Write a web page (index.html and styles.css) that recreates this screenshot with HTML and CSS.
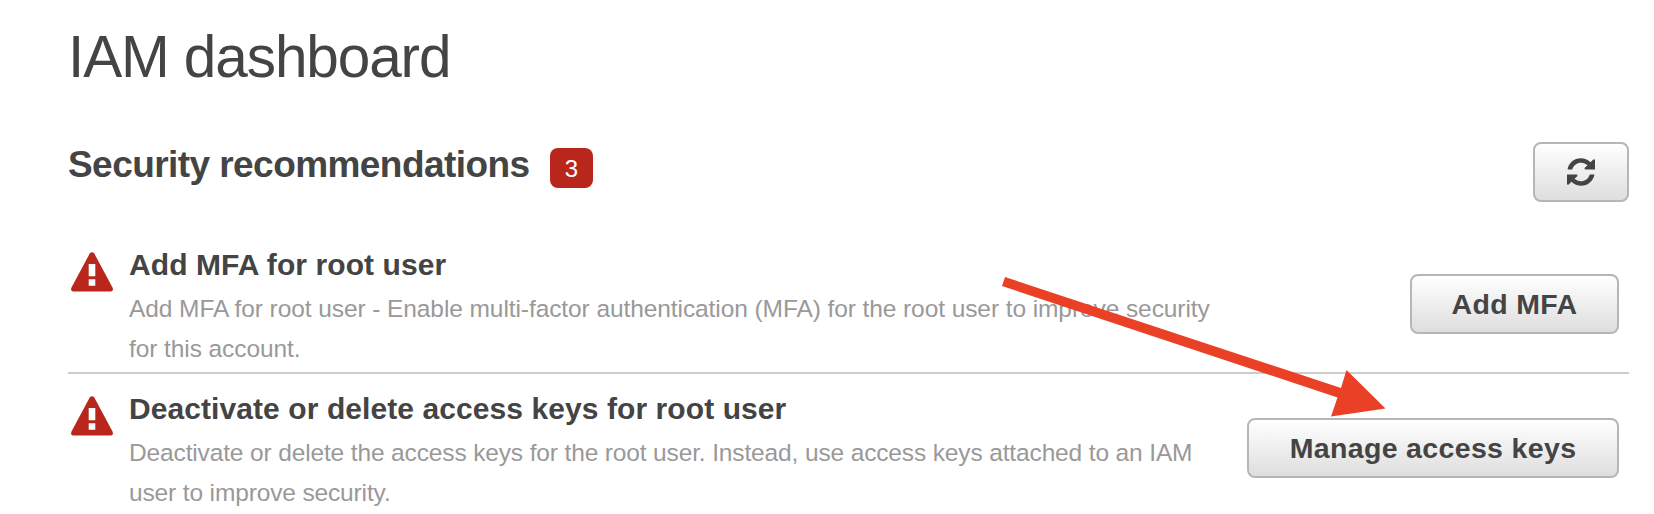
FILE: index.html
```html
<!DOCTYPE html>
<html lang="en">
<head>
<meta charset="utf-8">
<title>IAM dashboard</title>
<link rel="stylesheet" href="styles.css">
</head>
<body>
<main class="page">
  <h1 class="page-title">IAM dashboard</h1>
  <header class="section-head">
    <h2 class="section-title">Security recommendations</h2>
    <span class="badge">3</span>
    <button class="btn btn-icon" aria-label="Refresh">
      <svg class="refresh" viewBox="0 0 28 28"><path d="M.5 11.500C1.800 4.800 7.200 .3 13.800 .3C17.500 .3 20.800 1.700 23.600 4.200L26 1.800Q28 .4 28 2.500V11.500H18.200Q16.800 11 18 9.500L20.500 7.200C18.700 5.600 16.500 4.700 14 4.700C10 4.700 6.800 7 5.200 11.500Z"/><path d="M.5 11.500C1.800 4.800 7.200 .3 13.800 .3C17.500 .3 20.800 1.700 23.600 4.200L26 1.800Q28 .4 28 2.500V11.500H18.200Q16.800 11 18 9.500L20.500 7.200C18.700 5.600 16.500 4.700 14 4.700C10 4.700 6.800 7 5.200 11.500Z" transform="rotate(180 14 14)"/></svg>
    </button>
  </header>
  <section class="list">
    <article class="item">
      <svg class="warn" viewBox="0 0 42 40"><path class="warn-shape" d="M18.700 1.600Q21 -1.200 23.300 1.600L41.500 35.500Q43 39.500 39.500 39.500H2.500Q-1 39.500 .5 35.500Z"/><path class="warn-mark" d="M17.700 12h6.600v12.300h-6.600zM17.700 27.300h6.600v6.400h-6.600z"/></svg>
      <div class="text">
        <h3 class="item-title">Add MFA for root user</h3>
        <p class="desc desc-mfa">Add MFA for root user - Enable multi-factor authentication (MFA) for the root user to improve security<br>for this account.</p>
      </div>
      <button class="btn btn-add">Add MFA</button>
    </article>
    <article class="item">
      <svg class="warn" viewBox="0 0 42 40"><path class="warn-shape" d="M18.700 1.600Q21 -1.200 23.300 1.600L41.500 35.500Q43 39.500 39.500 39.500H2.500Q-1 39.500 .5 35.500Z"/><path class="warn-mark" d="M17.700 12h6.600v12.300h-6.600zM17.700 27.300h6.600v6.400h-6.600z"/></svg>
      <div class="text">
        <h3 class="item-title">Deactivate or delete access keys for root user</h3>
        <p class="desc">Deactivate or delete the access keys for the root user. Instead, use access keys attached to an IAM<br>user to improve security.</p>
      </div>
      <button class="btn btn-manage">Manage access keys</button>
    </article>
  </section>
  <svg class="arrow" viewBox="0 0 384 140"><path d="M5 0L341 111L346.500 93L385.500 131.500L331 139.500L337.500 120.500L2 9Z"/></svg>
</main>
</body>
</html>
```
FILE: styles.css
```css
* { box-sizing: border-box; margin: 0; }
body {
  background: #fff;
  color: #444;
  font-family: "Liberation Sans", Arial, sans-serif;
}
.page {
  height: 514px;
  padding: 22px 25px 0 68px;
  overflow: hidden;
  position: relative;
}
.page-title {
  font-size: 58.5px;
  font-weight: 400;
  letter-spacing: -1.1px;
  line-height: 70px;
  height: 120px;
}
.section-head {
  display: flex;
  height: 88px;
}
.section-title {
  font-size: 37px;
  letter-spacing: -0.56px;
  line-height: 46px;
  width: 482px;
  white-space: nowrap;
}
.badge {
  width: 43px;
  height: 40px;
  margin-top: 6px;
  border-radius: 8px;
  background: #b9261b;
  color: #fff;
  font-size: 24px;
  line-height: 41px;
  text-align: center;
}
.btn {
  height: 60px;
  padding: 0;
  border: 2px solid #b6b6b6;
  border-radius: 8px;
  background: linear-gradient(#fff, #dedede);
  color: #444;
  font: bold 28.5px/56px "Liberation Sans", Arial, sans-serif;
  letter-spacing: 0.35px;
  white-space: nowrap;
  flex: none;
}
.btn-icon {
  width: 96px;
  margin-left: auto;
  display: flex;
  align-items: center;
  justify-content: center;
}
.refresh { width: 28px; height: 28px; fill: #444; }
.item {
  display: flex;
  align-items: flex-start;
  height: 144px;
  padding: 14px 10px 0 3px;
  border-bottom: 2px solid #ccc;
}
.item:last-child { border-bottom: 0; }
.warn { width: 42px; height: 40px; margin: 8px 16px 0 0; overflow: visible; flex: none; }
.warn-shape { fill: #b9261b; }
.warn-mark { fill: #fff; }
.text { flex: 1; min-width: 0; white-space: nowrap; }
.item-title {
  margin-top: 1px;
  font-size: 30px;
  letter-spacing: 0.08px;
  line-height: 40px;
}
.desc {
  margin-top: 4px;
  color: #999;
  font-size: 24.5px;
  letter-spacing: -0.14px;
  line-height: 40px;
}
.desc-mfa { letter-spacing: -0.085px; }
.item .btn { margin-top: 30px; }
.btn-add { width: 209px; }
.btn-manage { width: 372px; }
.arrow {
  position: absolute;
  left: 1000px;
  top: 277px;
  width: 384px;
  height: 140px;
  overflow: visible;
  fill: #ea4025;
  pointer-events: none;
}
```
